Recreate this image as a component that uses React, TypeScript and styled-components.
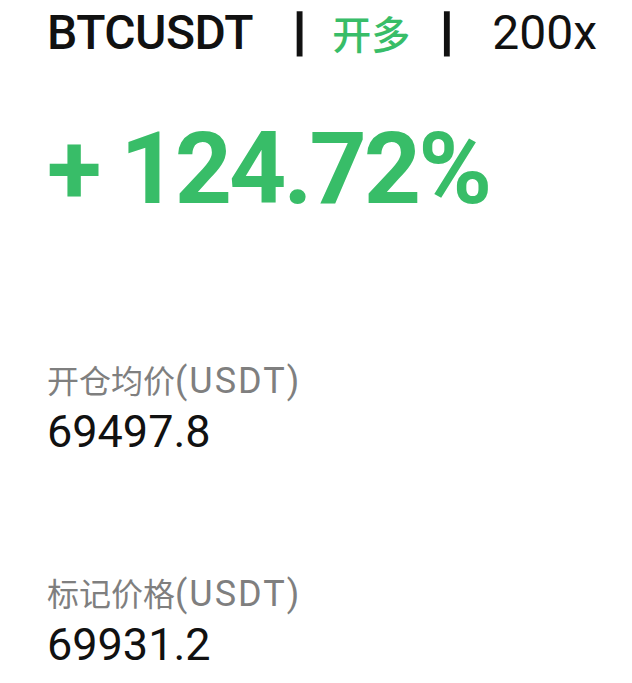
import React from 'react';
import styled, { createGlobalStyle } from 'styled-components';

const GlobalStyle = createGlobalStyle`
    body {
        margin: 0;
        background: #ffffff;
        font-family: Roboto, "Noto Sans CJK SC", sans-serif;
    }
`

const GREEN = '#38bd68';

export default function App(): JSX.Element {
    return(
        <Page>
            <GlobalStyle />
            <Header>
                <Symbol>BTCUSDT</Symbol>
                <Pipe $left={40}>|</Pipe>
                <Side $left={26}>开多</Side>
                <Pipe $left={30}>|</Pipe>
                <Leverage $left={39}>200x</Leverage>
            </Header>
            <Profit>+ 124.72%</Profit>
            <Field $top={142}>
                <Label>开仓均价<Unit>(USDT)</Unit></Label>
                <Value>69497.8</Value>
            </Field>
            <Field $top={116}>
                <Label>标记价格<Unit>(USDT)</Unit></Label>
                <Value>69931.2</Value>
            </Field>
        </Page>
    )
}

const Page = styled.div`
    padding: 0 0 0 47px;
    width: 632px;
    height: 683px;
    box-sizing: border-box;
    overflow: hidden;
`

const Header = styled.div`
    display: flex;
    align-items: baseline;
    height: 56px;
    color: #111111;
`

const Symbol = styled.span`
    font-size: 48px;
    line-height: 56px;
    font-weight: 500;
    letter-spacing: -0.5px;
`

const Pipe = styled.span<{ $left: number }>`
    margin-left: ${props => props.$left}px;
    font-size: 52px;
    line-height: 64px;
    font-weight: 700;
    color: #111111;
    -webkit-text-stroke: 1.5px #111111;
`

const Side = styled.span<{ $left: number }>`
    margin-left: ${props => props.$left}px;
    font-family: "Noto Sans CJK SC", sans-serif;
    font-size: 39px;
    line-height: 56px;
    font-weight: 500;
    color: ${GREEN};
`

const Leverage = styled.span<{ $left: number }>`
    margin-left: ${props => props.$left}px;
    font-size: 48px;
    line-height: 56px;
    font-weight: 400;
`

const Profit = styled.div`
    margin-top: 63px;
    font-size: 100px;
    line-height: 100px;
    font-weight: 700;
    letter-spacing: -3px;
    color: ${GREEN};
`

const Field = styled.div<{ $top: number }>`
    margin-top: ${props => props.$top}px;
    display: flex;
    flex-direction: column;
    gap: 4px;
`

const Label = styled.div`
    font-size: 32px;
    line-height: 40px;
    color: #7f7f7f;
`

const Unit = styled.span`
    font-size: 36px;
    letter-spacing: 2px;
`

const Value = styled.div`
    font-size: 45px;
    line-height: 52px;
    color: #111111;
`
